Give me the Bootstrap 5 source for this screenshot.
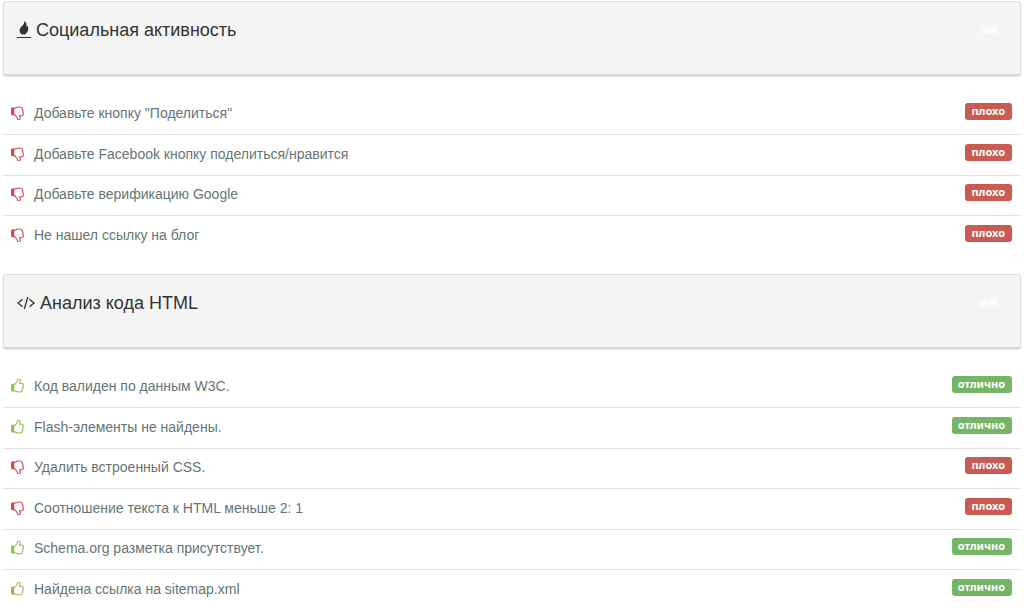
<!DOCTYPE html>
<html lang="ru">
<head>
<meta charset="utf-8">
<meta name="viewport" content="width=device-width, initial-scale=1">
<title>Анализ сайта</title>
<link href="https://cdn.jsdelivr.net/npm/bootstrap@5.3.0/dist/css/bootstrap.min.css" rel="stylesheet">
<style>
body{font-family:"Liberation Sans",Arial,sans-serif;font-size:14px;line-height:20px;color:#657575;background:#fff}
.report{padding:1px 3px 0}
.panel-head{min-height:75px;padding:18px 22px 0 13px;background:#f4f4f4;border:1px solid #dfdfdf;border-bottom:2px solid #d8d8d8;border-radius:3px;box-shadow:0 1px 2px rgba(0,0,0,.12);color:#333}
.panel-head h2{font-size:18px;line-height:20px;gap:5px}
.score{font:bold 11px/20px "Noto Sans",sans-serif;color:#fff}
.checks{padding-top:19px;margin-bottom:17px}
.check-row{min-height:40px;padding:0 9px 3px 8px;border-bottom:1px solid #e2e4e4}
.check-row:nth-child(even){min-height:41px}
.check-row:last-child{border-bottom:0}
.thumb{width:13px;height:14px;margin-right:10px}
.good .thumb{color:#8fbe56}
.bad .thumb{color:#d2454c}
.mark-label{font:bold 11px/16px "Noto Sans",sans-serif;padding:0 7px 1px 6px;border-radius:3px;margin-bottom:3px;color:#fff}
.good .mark-label{background:#74b566}
.bad .mark-label{background:#cb5a52}
</style>
</head>
<body>
<svg class="d-none">
<symbol id="up" viewBox="128 64 1536 1664"><path d="M200 830h260v680H200z" fill="currentColor" fill-opacity=".5"/><path fill="currentColor" d="M384 1344q0 26-19 45t-45 19-45-19-19-45 19-45 45-19 45 19 19 45zm1152-576q0-51-39-89.500t-89-38.500h-352q0-58 48-159.500t48-160.500q0-98-32-145t-128-47q-26 26-38 85t-30.500 125.500-59.500 109.500q-22 23-77 91-4 5-23 30t-31.500 41-34.500 42.500-40 44-38.500 35.500-40 27-35.500 9h-32v640h32q13 0 31.500 3t33 6.500 38 11 35 11.500 35.500 12.500 29 10.500q211 73 342 73h121q192 0 192-167 0-26-5-56 30-16 47.500-52.500t17.500-73.500-18-69q53-50 53-119 0-25-10-55.500t-25-47.500q32-1 53.500-47t21.500-81zm128-1q0 89-49 163 9 33 9 69 0 77-38 144 3 21 3 43 0 101-60 178 1 139-85 219.500t-227 80.500h-129q-96 0-189.500-22.500t-216.500-65.500q-116-40-138-40h-288q-53 0-90.500-37.500t-37.500-90.500v-640q0-53 37.500-90.500t90.500-37.500h274q36-24 137-155 58-75 107-128 24-25 35.500-85.500t30.500-126.500 62-108q39-37 90-37 84 0 151 32.500t102 101.500 35 186q0 93-48 192h176q104 0 180 76t76 179z"/></symbol>
<symbol id="down" viewBox="0 0 13 14"><g transform="matrix(1 0 0 -1 0 14)"><use href="#up" width="13" height="14"/></g></symbol>
</svg>
<main class="report">
<section>
<header class="panel-head d-flex justify-content-between align-items-start">
<h2 class="m-0 d-flex align-items-center"><svg width="14" height="18" viewBox="0 0 14 18" aria-hidden="true"><path d="M7.300 0c.3 2-.5 3.200-2 4.800C3.500 6.600 2 8.300 2.800 10.700c.5 1.600 1.800 2.700 3.200 3.300-.5-1.700 0-3 1-4-.2 1.400.1 2.500-.5 4 2.500-.8 4.200-3 4.600-5.300.3-1.800 0-2.800-.3-3.900-.4.700-.8 1-1.400 1.300C10 3.300 9.300 1.300 7.300 0z" fill="#333"/><path d="M5.500 9h2.500v4h-2z" fill="#333"/><path d="M0 16.500h14" stroke="#333"/></svg>Социальная активность</h2>
<span class="score">0/4</span>
</header>
<ul class="checks list-unstyled">
<li class="check-row bad d-flex align-items-center"><svg class="thumb" aria-hidden="true"><use href="#down"/></svg><span class="flex-grow-1">Добавьте кнопку "Поделиться"</span><span class="mark-label">плохо</span></li>
<li class="check-row bad d-flex align-items-center"><svg class="thumb" aria-hidden="true"><use href="#down"/></svg><span class="flex-grow-1">Добавьте Facebook кнопку поделиться/нравится</span><span class="mark-label">плохо</span></li>
<li class="check-row bad d-flex align-items-center"><svg class="thumb" aria-hidden="true"><use href="#down"/></svg><span class="flex-grow-1">Добавьте верификацию Google</span><span class="mark-label">плохо</span></li>
<li class="check-row bad d-flex align-items-center"><svg class="thumb" aria-hidden="true"><use href="#down"/></svg><span class="flex-grow-1">Не нашел ссылку на блог</span><span class="mark-label">плохо</span></li>
</ul>
</section>
<section>
<header class="panel-head d-flex justify-content-between align-items-start">
<h2 class="m-0 d-flex align-items-center"><svg width="18" height="14" viewBox="0 0 18 14" aria-hidden="true"><path d="M5.500 3.200 1 7l4.500 3.800M12.500 3.200 17 7l-4.500 3.800M10.800 1 7.300 13" fill="none" stroke="#333" stroke-width="1.300"/></svg>Анализ кода HTML</h2>
<span class="score">0/6</span>
</header>
<ul class="checks list-unstyled mb-0">
<li class="check-row good d-flex align-items-center"><svg class="thumb" aria-hidden="true"><use href="#up"/></svg><span class="flex-grow-1">Код валиден по данным W3C.</span><span class="mark-label">отлично</span></li>
<li class="check-row good d-flex align-items-center"><svg class="thumb" aria-hidden="true"><use href="#up"/></svg><span class="flex-grow-1">Flash-элементы не найдены.</span><span class="mark-label">отлично</span></li>
<li class="check-row bad d-flex align-items-center"><svg class="thumb" aria-hidden="true"><use href="#down"/></svg><span class="flex-grow-1">Удалить встроенный CSS.</span><span class="mark-label">плохо</span></li>
<li class="check-row bad d-flex align-items-center"><svg class="thumb" aria-hidden="true"><use href="#down"/></svg><span class="flex-grow-1">Соотношение текста к HTML меньше 2: 1</span><span class="mark-label">плохо</span></li>
<li class="check-row good d-flex align-items-center"><svg class="thumb" aria-hidden="true"><use href="#up"/></svg><span class="flex-grow-1">Schema.org разметка присутствует.</span><span class="mark-label">отлично</span></li>
<li class="check-row good d-flex align-items-center"><svg class="thumb" aria-hidden="true"><use href="#up"/></svg><span class="flex-grow-1">Найдена ссылка на sitemap.xml</span><span class="mark-label">отлично</span></li>
</ul>
</section>
</main>
<script src="https://cdn.jsdelivr.net/npm/bootstrap@5.3.0/dist/js/bootstrap.bundle.min.js"></script>
</body>
</html>
